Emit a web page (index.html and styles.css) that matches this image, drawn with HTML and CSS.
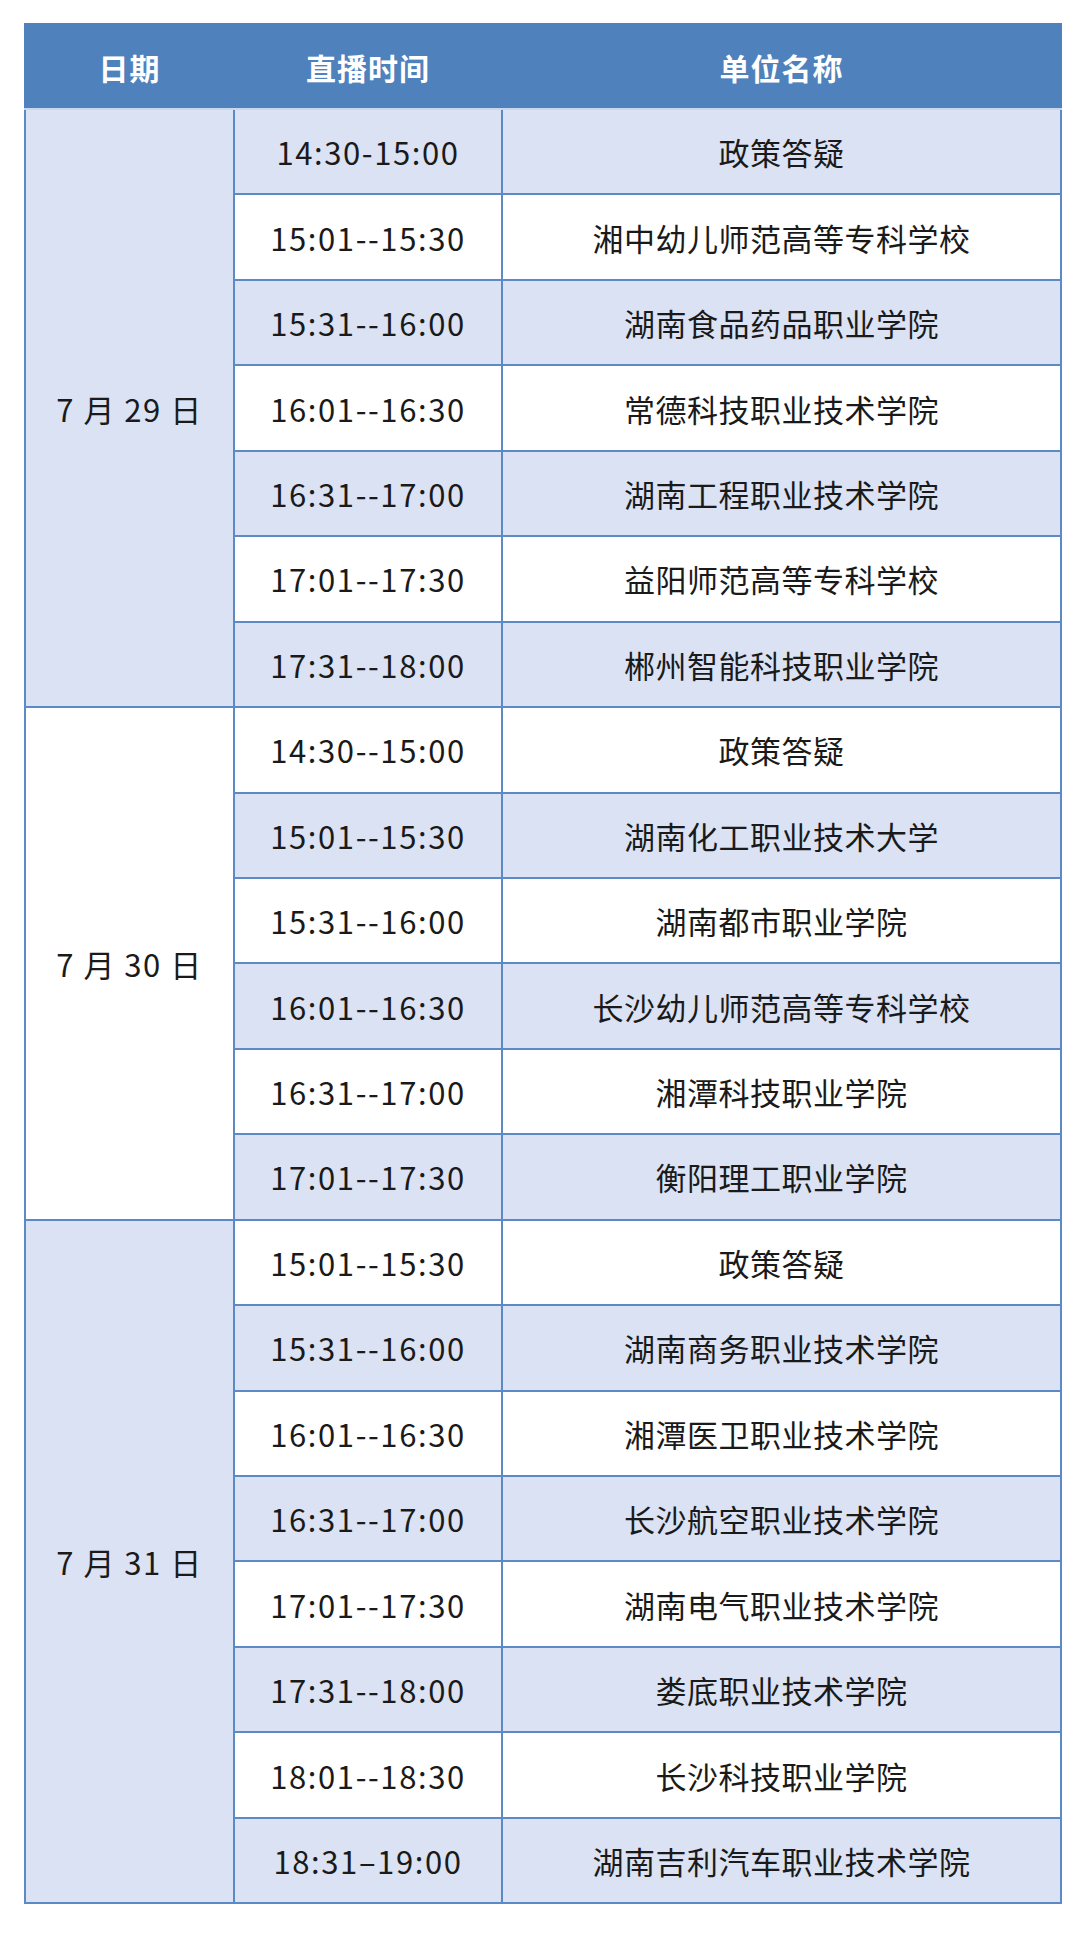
FILE: index.html
```html
<!DOCTYPE html>
<html lang="zh-CN">
<head>
<meta charset="utf-8">
<link rel="stylesheet" href="styles.css">
</head>
<body>
<table class="sched">
  <colgroup><col class="c-date"><col class="c-time"><col class="c-name"></colgroup>
  <thead>
    <tr><th>日期</th><th>直播时间</th><th>单位名称</th></tr>
  </thead>
  <tbody>
    <tr class="alt"><td class="date alt" rowspan="7">7 月 29 日</td><td class="time">14:30-15:00</td><td>政策答疑</td></tr>
    <tr><td class="time">15:01--15:30</td><td>湘中幼儿师范高等专科学校</td></tr>
    <tr class="alt"><td class="time">15:31--16:00</td><td>湖南食品药品职业学院</td></tr>
    <tr><td class="time">16:01--16:30</td><td>常德科技职业技术学院</td></tr>
    <tr class="alt"><td class="time">16:31--17:00</td><td>湖南工程职业技术学院</td></tr>
    <tr><td class="time">17:01--17:30</td><td>益阳师范高等专科学校</td></tr>
    <tr class="alt"><td class="time">17:31--18:00</td><td>郴州智能科技职业学院</td></tr>

    <tr><td class="date" rowspan="6">7 月 30 日</td><td class="time">14:30--15:00</td><td>政策答疑</td></tr>
    <tr class="alt"><td class="time">15:01--15:30</td><td>湖南化工职业技术大学</td></tr>
    <tr><td class="time">15:31--16:00</td><td>湖南都市职业学院</td></tr>
    <tr class="alt"><td class="time">16:01--16:30</td><td>长沙幼儿师范高等专科学校</td></tr>
    <tr><td class="time">16:31--17:00</td><td>湘潭科技职业学院</td></tr>
    <tr class="alt"><td class="time">17:01--17:30</td><td>衡阳理工职业学院</td></tr>

    <tr><td class="date alt" rowspan="8">7 月 31 日</td><td class="time">15:01--15:30</td><td>政策答疑</td></tr>
    <tr class="alt"><td class="time">15:31--16:00</td><td>湖南商务职业技术学院</td></tr>
    <tr><td class="time">16:01--16:30</td><td>湘潭医卫职业技术学院</td></tr>
    <tr class="alt"><td class="time">16:31--17:00</td><td>长沙航空职业技术学院</td></tr>
    <tr><td class="time">17:01--17:30</td><td>湖南电气职业技术学院</td></tr>
    <tr class="alt"><td class="time">17:31--18:00</td><td>娄底职业技术学院</td></tr>
    <tr><td class="time">18:01--18:30</td><td>长沙科技职业学院</td></tr>
    <tr class="alt"><td class="time">18:31–19:00</td><td>湖南吉利汽车职业技术学院</td></tr>
  </tbody>
</table>
</body>
</html>
```
FILE: styles.css
```css
html, body {
  margin: 0;
  padding: 0;
  background: #ffffff;
}
body {
  padding: 23px 0 0 24px;
  font-family: "Noto Sans CJK SC", "Noto Sans", sans-serif;
  color: #1a1a1a;
}
.sched {
  border-collapse: collapse;
  table-layout: fixed;
  width: 1036px;
  border: 2px solid #5b8ac6;
}
.c-date { width: 209px; }
.c-time { width: 268px; }
.c-name { width: 559px; }
.sched th {
  height: 83px;
  padding: 0;
  background: #4f81bd;
  color: #ffffff;
  font-size: 30px;
  line-height: 1;
  font-weight: 700;
  letter-spacing: 1px;
  border: 2px solid #4f81bd;
  border-bottom: 2px solid #c9d6ec;
  text-align: center;
  vertical-align: middle;
}
.sched td {
  height: 83.45px;
  padding: 0;
  font-size: 31px;
  line-height: 1;
  letter-spacing: 0.5px;
  text-align: center;
  vertical-align: middle;
  border: 2px solid #5b8ac6;
  background: #ffffff;
}
.sched tr.alt td { background: #dae2f4; }
.sched td.date { background: #ffffff; letter-spacing: 1.5px; }
.sched td.date.alt { background: #dae2f4; }
.sched td.time { letter-spacing: 1.6px; }
```
